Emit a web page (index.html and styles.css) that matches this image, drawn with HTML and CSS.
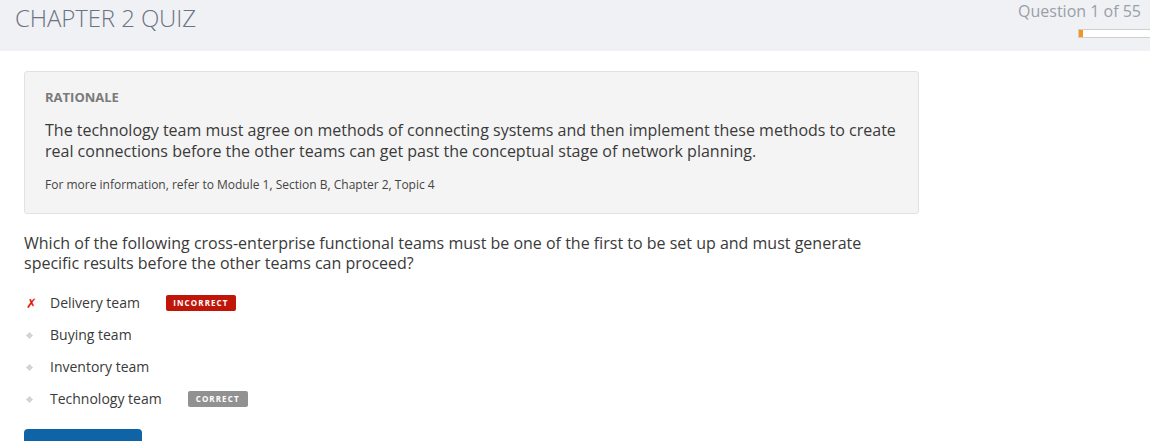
FILE: index.html
```html
<!DOCTYPE html>
<html>
<head>
<meta charset="utf-8">
<link rel="stylesheet" href="styles.css">
</head>
<body>
<header class="topbar">
  <h1 class="quiz-title">CHAPTER 2 QUIZ</h1>
  <div class="progress-area">
    <div class="progress-label">Question 1 of 55</div>
    <div class="progress-track"><div class="progress-fill" style="width:4px"></div></div>
  </div>
</header>
<main class="content">
  <section class="rationale">
    <div class="rationale-head">RATIONALE</div>
    <p class="rationale-text">The technology team must agree on methods of connecting systems and then implement these methods to create real connections before the other teams can get past the conceptual stage of network planning.</p>
    <p class="rationale-ref">For more information, refer to Module 1, Section B, Chapter 2, Topic 4</p>
  </section>
  <p class="question">Which of the following cross-enterprise functional teams must be one of the first to be set up and must generate specific results before the other teams can proceed?</p>
  <ul class="options">
    <li class="option">
      <span class="mark mark-wrong">✗</span>
      <span class="opt-text">Delivery team</span>
      <span class="badge badge-incorrect">INCORRECT</span>
    </li>
    <li class="option">
      <span class="mark"><span class="dot"></span></span>
      <span class="opt-text">Buying team</span>
    </li>
    <li class="option">
      <span class="mark"><span class="dot"></span></span>
      <span class="opt-text">Inventory team</span>
    </li>
    <li class="option">
      <span class="mark"><span class="dot"></span></span>
      <span class="opt-text">Technology team</span>
      <span class="badge badge-correct">CORRECT</span>
    </li>
  </ul>
  <div class="next-btn"></div>
</main>
</body>
</html>
```
FILE: styles.css
```css
html, body {
  margin: 0;
  padding: 0;
  background: #ffffff;
  font-family: "Open Sans", "Liberation Sans", sans-serif;
  overflow: hidden;
}
.topbar {
  height: 51px;
  background: #f0f1f5;
  display: flex;
  justify-content: space-between;
  align-items: flex-start;
}
.quiz-title {
  margin: 0;
  padding: 1px 0 0 15px;
  font-weight: 300;
  font-size: 24px;
  line-height: 33px;
  color: #6b7382;
  letter-spacing: -0.1px;
}
.progress-area {
  display: flex;
  flex-direction: column;
  align-items: flex-end;
}
.progress-label {
  font-size: 16px;
  line-height: 22px;
  color: #9a9fa8;
  padding: 0 9px 0 0;
}
.progress-track {
  margin-top: 7px;
  width: 71px;
  height: 7px;
  background: #ffffff;
  border: 1px solid #cfcfcf;
  border-right: none;
  display: flex;
}
.progress-fill {
  background: #f7931e;
  height: 100%;
}
.content {
  padding: 20px 24px 0 24px;
}
.rationale {
  width: 853px;
  background: #f4f4f4;
  border: 1px solid #e2e2e2;
  border-radius: 3px;
  padding: 17px 20px 20px 20px;
}
.rationale-head {
  font-size: 13px;
  font-weight: 700;
  color: #7a7a7a;
  line-height: 16px;
}
.rationale-text {
  margin: 15px 0 0 0;
  font-size: 16px;
  line-height: 21px;
  color: #3a3a3a;
}
.rationale-ref {
  margin: 15px 0 0 0;
  font-size: 12px;
  line-height: 16px;
  color: #444;
}
.question {
  margin: 19px 0 0 0;
  font-size: 16px;
  line-height: 20px;
  color: #3a3a3a;
  width: 870px;
}
.options {
  list-style: none;
  margin: 14px 0 0 0;
  padding: 0;
}
.option {
  display: flex;
  align-items: center;
  height: 32px;
}
.mark {
  width: 26px;
  display: flex;
  align-items: center;
  justify-content: flex-start;
  padding-left: 2px;
  box-sizing: border-box;
}
.mark-wrong {
  color: #e8140a;
  font-size: 13px;
  font-weight: 700;
  font-style: italic;
  font-family: "DejaVu Sans", sans-serif;
}
.dot {
  width: 5px;
  height: 5px;
  background: #d4d4d4;
  transform: rotate(45deg);
  margin-left: 1px;
}
.opt-text {
  font-size: 14px;
  color: #3a3a3a;
  line-height: 20px;
}
.badge {
  font-size: 8px;
  font-weight: 700;
  letter-spacing: 1.1px;
  color: #ffffff;
  border-radius: 2px;
  line-height: 16px;
  height: 16px;
  margin-left: 26px;
  margin-top: 0;
  text-align: center;
}
.badge-incorrect {
  background: #c0160a;
  width: 70px;
}
.badge-correct {
  background: #919191;
  width: 60px;
}
.next-btn {
  margin-top: 14px;
  width: 118px;
  height: 30px;
  background: #0f64a8;
  border-radius: 4px 4px 0 0;
}
```
